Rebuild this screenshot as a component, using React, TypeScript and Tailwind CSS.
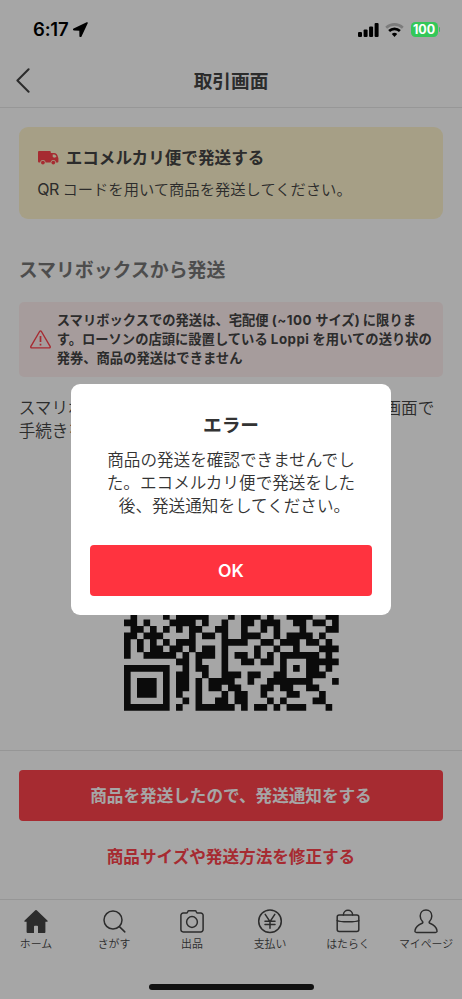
import React from 'react';

const QR_SIZE = 33;

// Dark columns of each visible module row, keyed by row index.
const QR_ROWS: Record<number, number[]> = {
  18: [1, 6, 8, 9, 10, 11, 12, 16, 18, 19, 20, 22, 25, 26, 27, 28, 31, 32],
  19: [0, 1, 3, 7, 8, 9, 10, 12, 15, 18, 19, 21, 22, 23, 26, 27, 29, 30, 32],
  20: [1, 2, 4, 6, 8, 10, 11, 14, 15, 18, 21, 23, 27, 31, 32],
  21: [0, 1, 3, 4, 5, 10, 12, 13, 15, 18, 19, 20, 23, 25, 26, 27, 28, 30],
  22: [0, 2, 4, 6, 8, 9, 10, 15, 16, 17, 18, 21, 22, 24, 25, 26, 28, 29, 31],
  23: [0, 2, 4, 5, 7, 8, 10, 12, 13, 15, 20, 23, 26, 30, 31, 32],
  24: [0, 3, 4, 5, 6, 7, 9, 11, 12, 13, 15, 17, 18, 20, 22, 24, 25, 26, 27, 28, 29, 31],
  25: [8, 9, 11, 15, 18, 19, 21, 22, 24, 28, 29, 30, 31, 32],
  26: [0, 1, 2, 3, 4, 5, 6, 9, 11, 12, 15, 24, 26, 28, 29, 31],
  27: [0, 6, 8, 9, 12, 15, 16, 17, 19, 20, 23, 24, 28, 29, 30],
  28: [0, 2, 3, 4, 6, 8, 9, 11, 13, 14, 15, 16, 19, 22, 23, 24, 25, 26, 27, 28, 32],
  29: [0, 2, 3, 4, 6, 8, 9, 11, 13, 14, 16, 17, 21, 22, 24, 25, 28, 29],
  30: [0, 2, 3, 4, 6, 8, 11, 15, 17, 18, 21, 25, 26, 30],
  31: [0, 6, 9, 11, 14, 15, 17, 18, 22, 24, 29, 30],
  32: [0, 1, 2, 3, 4, 5, 6, 8, 11, 12, 13, 14, 15, 16, 18, 20, 21, 23, 25, 26, 27, 31],
};

function QrCode() {
  const d = Object.entries(QR_ROWS)
    .flatMap(([row, cols]) => cols.map((c) => `M${c} ${row}h1.02v1.02h-1.02z`))
    .join('');
  return (
    <svg viewBox={`0 0 ${QR_SIZE} ${QR_SIZE}`} className="ml-[0.6px] h-[214.6px] w-[214.6px]" fill="#121212">
      <path d={d} />
    </svg>
  );
}

function StatusBar() {
  return (
    <div className="absolute inset-x-0 top-0 flex h-[59px] items-center justify-between pr-[22px] pl-[33px] text-black">
      <div className="flex items-center gap-[5px]">
        <span className="font-[Inter,sans-serif] text-[18.5px] leading-[19px] font-semibold tracking-[-0.2px]">
          6:17
        </span>
        <svg width="15" height="15" viewBox="0 0 15 15">
          <path
            d="M14 1 1 7.200c-.4.2-.3.600.1.600l6 .1.100 6c0 .500.500.600.700.1z"
            stroke="#000"
            strokeWidth="1.6"
            strokeLinejoin="round"
          />
        </svg>
      </div>
      <div className="flex items-center">
        <svg width="21" height="14" viewBox="0 0 21 14">
          <rect x="0" y="9" width="4" height="5" rx="1.1" />
          <rect x="5.6" y="6.5" width="4" height="7.5" rx="1.1" />
          <rect x="11.1" y="3.5" width="4" height="10.5" rx="1.1" />
          <rect x="16.6" y="0" width="4" height="14" rx="1.1" />
        </svg>
        <svg className="ml-[6px]" width="19" height="14" viewBox="0 0 19 14" fill="none">
          <path d="M1.2 4.7a12.2 12.2 0 0 1 16.6 0" stroke="#7c7c7c" strokeWidth="2.7" />
          <path d="M4.1 8.1a7.9 7.9 0 0 1 10.8 0" stroke="#000" strokeWidth="2.7" />
          <path d="M6.8 10.9a4 4 0 0 1 5.4 0L9.5 13.9z" fill="#000" />
        </svg>
        <div className="ml-[7px] flex h-[15px] w-[27px] items-center justify-center rounded-[4.5px] bg-[#34c759] pt-px font-[Inter,sans-serif] text-[12.5px] leading-none font-bold text-white">
          100
        </div>
        <div className="ml-px h-[5px] w-[1.5px] rounded-r-full bg-[#34c759]" />
      </div>
    </div>
  );
}

function Truck() {
  return (
    <svg width="21" height="14" viewBox="0 0 21 14">
      <path
        d="M1.2 0h10.6a1 1 0 0 1 1 1v1h3.3c2 0 3.4 1.5 3.8 3.7l.5 1.5v3.3c0 .6-.4 1-1 1H1.3c-.8 0-1.300-.4-1.300-1.200V1.200C0 .5.5 0 1.200 0z"
        fill="#ff424c"
      />
      <path d="M14.700 3.400h1.400c1.300 0 2 .8 2.300 2.600l-2.400.8-1.300-1z" fill="#fff5ce" />
      <circle cx="4.900" cy="11.600" r="2.600" fill="#fff5ce" />
      <circle cx="15.300" cy="11.600" r="2.600" fill="#fff5ce" />
      <circle cx="4.900" cy="11.600" r="1.900" fill="#ff424c" />
      <circle cx="15.300" cy="11.600" r="1.900" fill="#ff424c" />
    </svg>
  );
}

const tabs: { label: string; icon: React.ReactNode }[] = [
  {
    label: 'ホーム',
    icon: (
      <path
        d="M12.3 1.3a1 1 0 0 1 1.4 0l10.7 10.2c.6.6.3 1.300-.5 1.300h-1.500v10.100c0 .6-.4 1-1 1H15v-6.300c0-.5-.3-.8-.8-.8h-2.400c-.5 0-.8.3-.8.8v6.300H4.600a1 1 0 0 1-1-1V12.800H2.100c-.8 0-1.100-.7-.5-1.300z"
        fill="#444"
        stroke="none"
      />
    ),
  },
  {
    label: 'さがす',
    icon: (
      <>
        <circle cx="12" cy="11" r="9" />
        <path d="m18.400 17.600 5.400 5.300" />
      </>
    ),
  },
  {
    label: '出品',
    icon: (
      <>
        <path d="M4.200 4h3.300c.6 0 .8-.2 1-.7l.3-.8c.2-.6.500-.8 1.100-.8h6.200c.6 0 .9.2 1.100.8l.3.8c.2.500.4.700 1 .700h3.300a2.300 2.300 0 0 1 2.300 2.300v14.300a2.300 2.300 0 0 1-2.300 2.300H4.200a2.300 2.300 0 0 1-2.300-2.300V6.300a2.300 2.300 0 0 1 2.300-2.300z" />
        <circle cx="13" cy="13" r="5.400" />
      </>
    ),
  },
  {
    label: '支払い',
    icon: (
      <>
        <circle cx="13" cy="12.200" r="11.300" />
        <path d="m8.200 5.300 4.800 7.300 4.800-7.300M13 12.600v6.600M8 12.200h10M8 15.500h10" />
      </>
    ),
  },
  {
    label: 'はたらく',
    icon: (
      <>
        <rect x="2.200" y="6" width="21.600" height="16.600" rx="2" />
        <path d="M2.200 11.500c2.700 1.800 18.900 1.800 21.600 0M8.400 6c0-6.200 9.200-6.200 9.200 0" />
      </>
    ),
  },
  {
    label: 'マイページ',
    icon: (
      <path d="M13 1.100c-3.500 0-5.800 2.400-5.800 5.900 0 2.200.8 4 2.300 5.500.6.600.400 1.400-.4 1.800-3.800 1.500-6.300 3.500-7.100 7.200-.3 1.100.3 1.900 1.500 1.900h19c1.200 0 1.800-.8 1.500-1.900-.8-3.700-3.300-5.700-7.100-7.200-.8-.4-1-1.200-.4-1.800 1.500-1.500 2.300-3.300 2.300-5.500 0-3.500-2.300-5.900-5.800-5.900z" />
    ),
  },
];

function TabBar() {
  return (
    <nav className="-mx-[3px] flex border-t border-[#e6e6e6] pt-[9px]">
      {tabs.map((tab) => (
        <div key={tab.label} className="flex w-[78px] flex-col items-center">
          <svg
            width="26"
            height="25"
            viewBox="0 0 26 25"
            fill="none"
            stroke="#444"
            strokeWidth="1.5"
            strokeLinecap="round"
            strokeLinejoin="round"
          >
            {tab.icon}
          </svg>
          <span className="mt-[2px] text-[10.9px] leading-[16px] font-[350] whitespace-nowrap text-[#444]">
            {tab.label}
          </span>
        </div>
      ))}
    </nav>
  );
}

function ErrorDialog() {
  return (
    <div className="absolute top-[384px] left-[71px] flex h-[231px] w-[320px] flex-col items-center rounded-[9px] bg-white px-[19px] text-[#333]">
      <h2 className="mt-[28px] text-[18.7px] leading-[28px] font-bold">エラー</h2>
      <p className="mt-[9px] text-center text-[16.6px] leading-[23px] font-[350] whitespace-nowrap">
        商品の発送を確認できませんでし
        <br />
        た。エコメルカリ便で発送をした
        <br />
        <span className="pl-[7px]">後、発送通知をしてください。</span>
      </p>
      <button className="mt-[27px] h-[51px] w-full rounded-[4px] bg-[#ff333f] pt-[2px] font-[Inter,sans-serif] text-[17.5px] font-semibold text-white">
        OK
      </button>
    </div>
  );
}

export default function App() {
  return (
    <div className="relative flex h-[999px] w-[462px] flex-col overflow-hidden bg-white font-[Inter,'Noto_Sans_CJK_JP',sans-serif] text-[#444]">
      <header className="flex h-[108px] shrink-0 items-end border-b border-[#e8e8e8] pb-[11px]">
        <div className="flex w-full items-center px-[16px]">
          <svg className="mb-[3px]" width="14" height="25" viewBox="0 0 14 25" fill="none">
            <path
              d="M12.600 1.200 1.400 12.500l11.200 11.300"
              stroke="#444"
              strokeWidth="2"
              strokeLinecap="round"
              strokeLinejoin="round"
            />
          </svg>
          <h1 className="mr-[14px] flex-1 text-center text-[18.700px] leading-[28px] font-bold">取引画面</h1>
        </div>
      </header>

      <main className="flex h-[642px] shrink-0 flex-col px-[18.700px] pt-[19px]">
        <section className="h-[92px] shrink-0 rounded-[9px] bg-[#fff5ce] pt-[19px] pl-[19.500px]">
          <div className="flex items-center gap-[6.500px]">
            <Truck />
            <h2 className="text-[16.600px] leading-[24px] font-bold">エコメルカリ便で発送する</h2>
          </div>
          <p className="mt-[8px] -ml-px text-[15.300px] leading-[24px] font-[350]">
            <span className="text-[16px] leading-none font-normal tracking-[-0.300px]">QR</span>{' '}
            <span className="-ml-px">コードを用いて商品を発送してください。</span>
          </p>
        </section>

        <h2 className="mt-[38px] text-[18.900px] leading-[28px] font-bold text-[#777]">スマリボックスから発送</h2>

        <section className="mt-[17px] flex h-[75px] shrink-0 items-center rounded-[5px] bg-[#fff0f0] pl-[11px]">
          <svg width="21" height="19" viewBox="0 0 21 19" fill="none" stroke="#ff424c" strokeLinejoin="round">
            <path
              d="M9.600 1.500.9 16.400c-.4.700 0 1.500.8 1.500h17.500c.9 0 1.300-.8.900-1.500L11.400 1.500c-.400-.700-1.400-.700-1.800 0z"
              strokeWidth="1.400"
            />
            <path d="M10.500 6v6M10.500 13.700v1.700" strokeWidth="1.700" />
          </svg>
          <p className="ml-[6px] text-[13.300px] leading-[18.700px] font-bold whitespace-nowrap">
            スマリボックスでの発送は、宅配便 <span className="tracking-[0.500px]">(~100</span> サイズ) に限りま
            <br />
            す。ローソンの店頭に設置している <span className="tracking-[0.500px]">Loppi</span> を用いての送り状の
            <br />
            発券、商品の発送はできません
          </p>
        </section>

        <div className="mt-[20px] flex justify-between pr-[9px] text-[16.600px] leading-[23px] font-[350]">
          <p>
            スマリボ
            <br />
            手続きを
          </p>
          <p>画面で</p>
        </div>

        <div className="mt-[53px] flex justify-center">
          <QrCode />
        </div>
      </main>

      <footer className="flex h-[149px] shrink-0 flex-col items-center border-t border-[#e6e6e6] px-[18.700px] pt-[19px]">
        <button className="h-[51px] w-full rounded-[4px] bg-[#ff424c] pt-[2px] text-[16.600px] font-bold text-white">
          商品を発送したので、発送通知をする
        </button>
        <button className="mt-[24px] text-[16.600px] leading-[24px] font-bold text-[#ff424c]">
          商品サイズや発送方法を修正する
        </button>
      </footer>

      <TabBar />

      <div className="absolute inset-0 bg-black/35" />
      <StatusBar />
      <div className="absolute bottom-[9.500px] left-[149px] h-[6px] w-[164.500px] rounded-full bg-[#111]" />
      <ErrorDialog />
    </div>
  );
}
